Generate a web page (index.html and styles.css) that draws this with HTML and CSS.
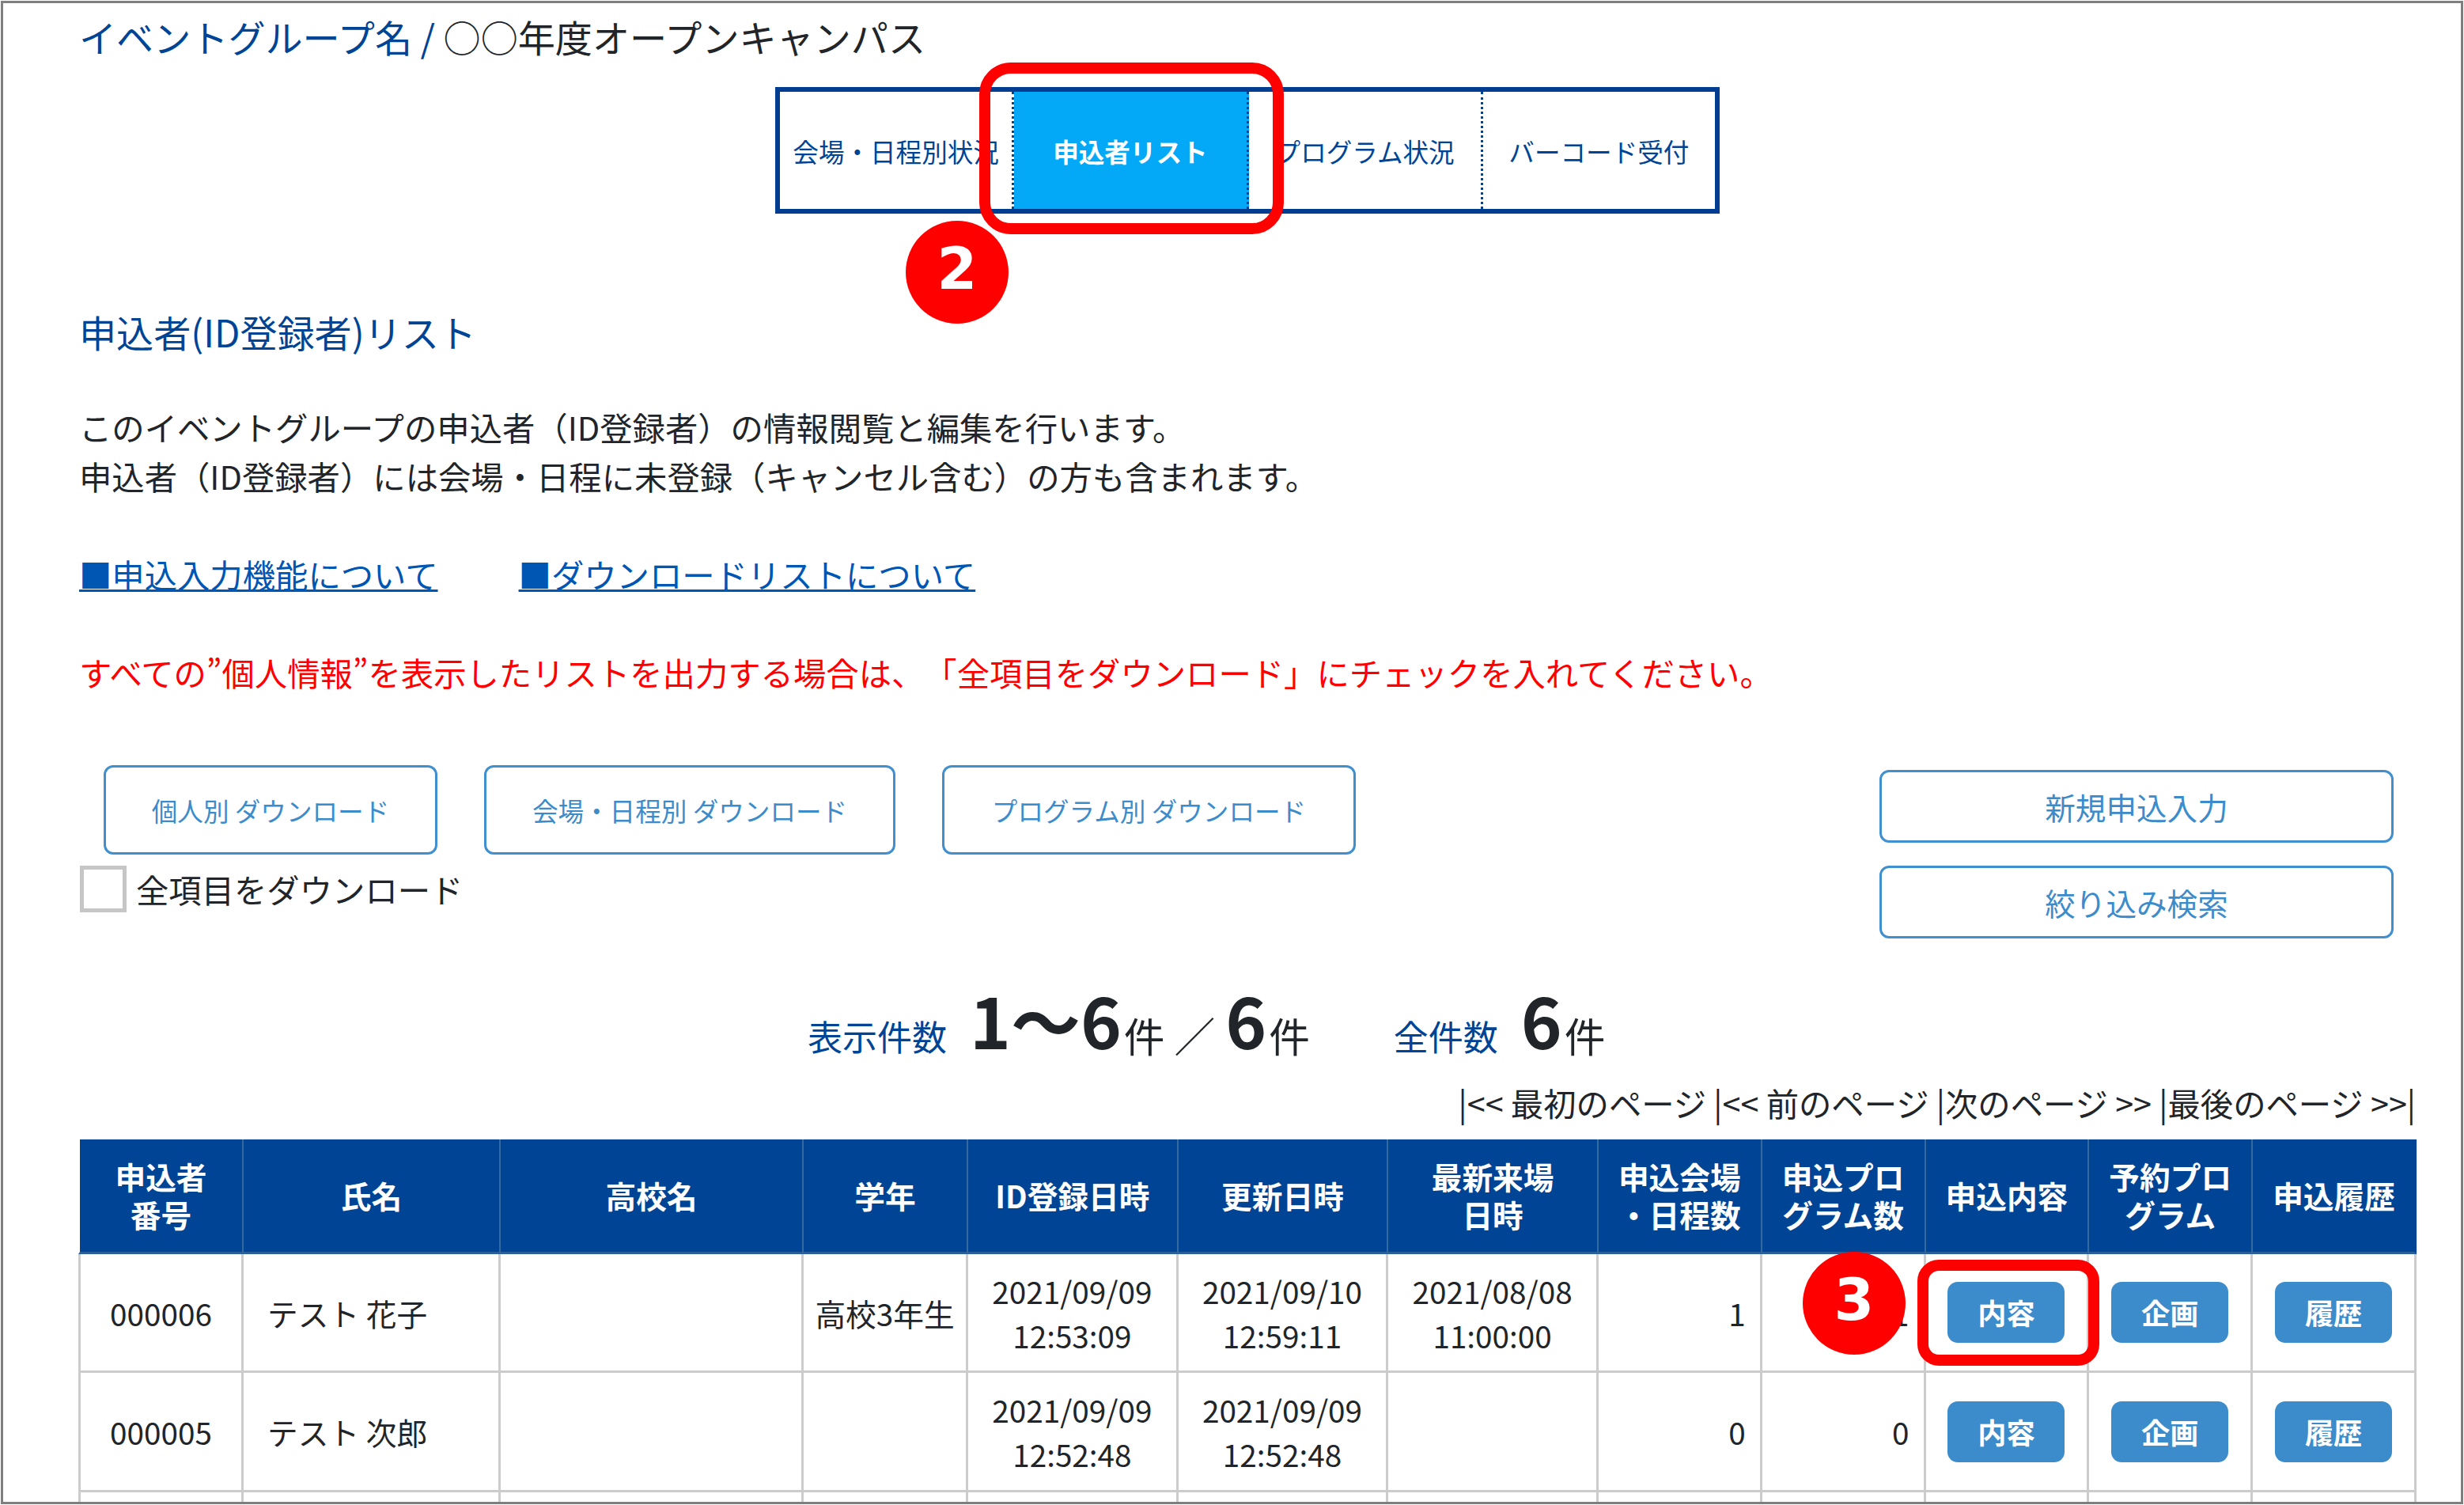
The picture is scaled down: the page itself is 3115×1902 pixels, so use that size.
FILE: index.html
```html
<!DOCTYPE html>
<html lang="ja">
<head>
<meta charset="UTF-8">
<meta name="viewport" content="width=device-width, initial-scale=1.0">
<title>申込者リスト</title>
<link rel="stylesheet" href="styles.css">
</head>
<body>
<div class="page">
    <h1 class="group-name"><span>イベントグループ名 / </span>○○年度オープンキャンパス</h1>

    <nav class="tabs">
        <a class="tab">会場・日程別状況</a>
        <a class="tab active">申込者リスト</a>
        <a class="tab">プログラム状況</a>
        <a class="tab">バーコード受付</a>
    </nav>

    <h2 class="heading">申込者(ID登録者)リスト</h2>

    <div class="lead">
        <p>このイベントグループの申込者（ID登録者）の情報閲覧と編集を行います。<br>申込者（ID登録者）には会場・日程に未登録（キャンセル含む）の方も含まれます。</p>
        <p><a class="help" href="#">■申込入力機能について</a><a class="help" href="#">■ダウンロードリストについて</a></p>
        <p class="alert">すべての”個人情報”を表示したリストを出力する場合は、「全項目をダウンロード」にチェックを入れてください。</p>
    </div>

    <div class="actions">
        <div>
            <div class="downloads">
                <a class="btn-line dl-person">個人別 ダウンロード</a>
                <a class="btn-line dl-venue">会場・日程別 ダウンロード</a>
                <a class="btn-line dl-program">プログラム別 ダウンロード</a>
            </div>
            <label class="all-items"><span class="box"></span>全項目をダウンロード</label>
        </div>
        <div class="side">
            <a class="btn-line">新規申込入力</a>
            <a class="btn-line">絞り込み検索</a>
        </div>
    </div>

    <div class="count"><span class="label">表示件数</span><b>1〜6</b><span class="unit">件</span><span class="slash">／</span><b>6</b><span class="unit">件</span><span class="label total">全件数</span><b>6</b><span class="unit">件</span></div>

    <div class="pager">|&lt;&lt; 最初のページ |&lt;&lt; 前のページ |次のページ &gt;&gt; |最後のページ &gt;&gt;|</div>

    <table class="list">
        <colgroup>
            <col class="c-no"><col class="c-name"><col class="c-school"><col class="c-grade">
            <col class="c-date"><col class="c-date"><col class="c-date">
            <col class="c-num"><col class="c-num"><col class="c-num"><col class="c-num"><col class="c-num">
        </colgroup>
        <thead>
            <tr>
                <th>申込者<br>番号</th>
                <th>氏名</th>
                <th>高校名</th>
                <th>学年</th>
                <th>ID登録日時</th>
                <th>更新日時</th>
                <th>最新来場<br>日時</th>
                <th>申込会場<br>・日程数</th>
                <th>申込プロ<br>グラム数</th>
                <th>申込内容</th>
                <th>予約プロ<br>グラム</th>
                <th>申込履歴</th>
            </tr>
        </thead>
        <tbody>
            <tr>
                <td>000006</td>
                <td class="name">テスト 花子</td>
                <td></td>
                <td>高校3年生</td>
                <td>2021/09/09<br>12:53:09</td>
                <td>2021/09/10<br>12:59:11</td>
                <td>2021/08/08<br>11:00:00</td>
                <td class="num">1</td>
                <td class="num">1</td>
                <td><a class="btn">内容</a></td>
                <td><a class="btn">企画</a></td>
                <td><a class="btn">履歴</a></td>
            </tr>
            <tr>
                <td>000005</td>
                <td class="name">テスト 次郎</td>
                <td></td>
                <td></td>
                <td>2021/09/09<br>12:52:48</td>
                <td>2021/09/09<br>12:52:48</td>
                <td></td>
                <td class="num">0</td>
                <td class="num">0</td>
                <td><a class="btn">内容</a></td>
                <td><a class="btn">企画</a></td>
                <td><a class="btn">履歴</a></td>
            </tr>
            <tr>
                <td></td><td></td><td></td><td></td><td></td><td></td>
                <td></td><td></td><td></td><td></td><td></td><td></td>
            </tr>
        </tbody>
    </table>

    <!-- 手順の番号と赤枠 -->
    <div class="mark mark-tab"></div>
    <div class="step step-2">2</div>
    <div class="mark mark-detail"></div>
    <div class="step step-3">3</div>
</div>
</body>
</html>
```

FILE: styles.css
```css
* {
    box-sizing: border-box;
}
body {
    margin: 0;
    padding: 1px;
    height: 1902px;
    overflow: hidden;
    background: #fff;
    color: #212529;
    font-family: "Noto Sans CJK JP", sans-serif;
    font-size: 41.35px;
    line-height: 62.1px;
    text-spacing-trim: space-all;
}
.page {
    position: relative;
    width: 3113px;
    height: 1900px;
    padding: 7px 57px 0 96px;
    border: 3px solid #7f7f7f;
    overflow: hidden;
}
h1, h2, p {
    margin: 0;
    font-weight: normal;
}
.group-name,
.heading {
    font-size: 47.1px;
    line-height: 70px;
}
.group-name span,
.heading {
    color: #004595;
}

/* タブ */
.tabs {
    display: flex;
    width: 1194px;
    height: 160px;
    margin: 29px auto 0;
    border: 6px solid #003c90;
}
.tab {
    flex: 1;
    display: flex;
    align-items: center;
    justify-content: center;
    padding-top: 2px;
    border-right: 3px dotted #004595;
    color: #004595;
    font-size: 32.6px;
    white-space: nowrap;
}
.tab:last-child {
    border-right: none;
}
.tab.active {
    background: #03a9f7;
    color: #fff;
    font-weight: bold;
}

.heading {
    margin-top: 114px;
}
.lead {
    margin-top: 54px;
}
.lead p {
    margin-bottom: 62.1px;
}
.lead .alert {
    margin-bottom: 0;
    color: #f00;
}
.help {
    margin-right: 102px;
    color: #0056b3;
    text-decoration: underline;
    text-decoration-thickness: 3px;
}

/* ボタン */
.actions {
    display: flex;
    justify-content: space-between;
    margin-top: 86px;
}
.btn-line {
    display: flex;
    align-items: center;
    justify-content: center;
    border: 3px solid #4090d0;
    border-radius: 12px;
    color: #3c8ccc;
}
.downloads {
    display: flex;
    gap: 59px;
    padding-left: 31px;
}
.downloads .btn-line {
    height: 113px;
    padding-top: 2px;
    font-size: 32.6px;
}
.dl-person {
    width: 422px;
}
.dl-venue {
    width: 520px;
}
.dl-program {
    width: 523px;
}
.all-items {
    display: flex;
    align-items: center;
    height: 59px;
    margin-top: 14px;
}
.box {
    width: 59px;
    height: 59px;
    margin: 0 12px 0 1px;
    border: 5px solid #c6c6c6;
}
.side {
    display: flex;
    flex-direction: column;
    gap: 29px;
    width: 650px;
    margin-right: 28px;
    padding-top: 6px;
}
.side .btn-line {
    height: 92px;
    font-size: 38.6px;
}

/* 件数 */
.count {
    height: 88px;
    margin-top: 58px;
    padding-left: 921px;
    font-size: 88px;
    line-height: 88px;
    white-space: nowrap;
}
.count span {
    line-height: 1;
}
.count .label {
    margin-right: 29px;
    color: #004595;
    font-size: 44px;
    vertical-align: -2px;
}
.count .total {
    margin-left: 106px;
}
.count .unit,
.count .slash {
    font-size: 51.7px;
    vertical-align: -4px;
}
.count .unit {
    margin-left: 3px;
}
.count .slash {
    margin: 0 13px 0 12px;
}
.pager {
    margin-top: 30px;
    text-align: right;
}

/* 申込者一覧 */
.list {
    width: 2956px;
    margin: 16px 0 0 -1px;
    border-collapse: separate;
    border-spacing: 0;
    table-layout: fixed;
    font-size: 38.7px;
    line-height: 56px;
    text-align: center;
}
.c-no { width: 209px; }
.c-name { width: 325px; }
.c-school { width: 383px; }
.c-grade { width: 208px; }
.c-date { width: 265.6px; }
.c-num { width: 206.8px; }
.list th {
    height: 145px;
    padding: 0 0 2px;
    background: #004595;
    border-right: 2px solid #356a9f;
    border-bottom: 3px solid #2b5f98;
    color: #fff;
    line-height: 48px;
}
.list th:first-child {
    border-left: 2px solid #fff;
}
.list th:last-child {
    border-right-color: #004595;
}
.list td {
    height: 150.5px;
    padding: 1px 0 0;
    border-right: 3px solid #ccc;
    border-bottom: 3px solid #ccc;
}
.list td:first-child {
    border-left: 3px solid #ccc;
}
.list .name {
    padding-left: 30px;
    text-align: left;
}
.list .num {
    padding-right: 18px;
    text-align: right;
}
.btn {
    display: block;
    width: 148px;
    margin: 0 auto;
    border-radius: 13px;
    background: #3c8ccc;
    color: #fff;
    font-size: 36.2px;
    font-weight: bold;
    line-height: 77px;
}

/* 赤枠・番号 */
.mark {
    position: absolute;
    border: 14px solid #f00;
}
.mark-tab {
    left: 1234px;
    top: 75px;
    width: 385px;
    height: 217px;
    border-radius: 40px;
}
.mark-detail {
    left: 2420px;
    top: 1588px;
    width: 230px;
    height: 134px;
    border-radius: 27px;
}
.step {
    position: absolute;
    width: 130px;
    height: 130px;
    border-radius: 50%;
    background: #f00;
    color: #fff;
    font-family: "DejaVu Sans", sans-serif;
    font-size: 73px;
    font-weight: bold;
    line-height: 121px;
    text-align: center;
}
.step-2 {
    left: 1141px;
    top: 275px;
}
.step-3 {
    left: 2275px;
    top: 1578px;
}
```
